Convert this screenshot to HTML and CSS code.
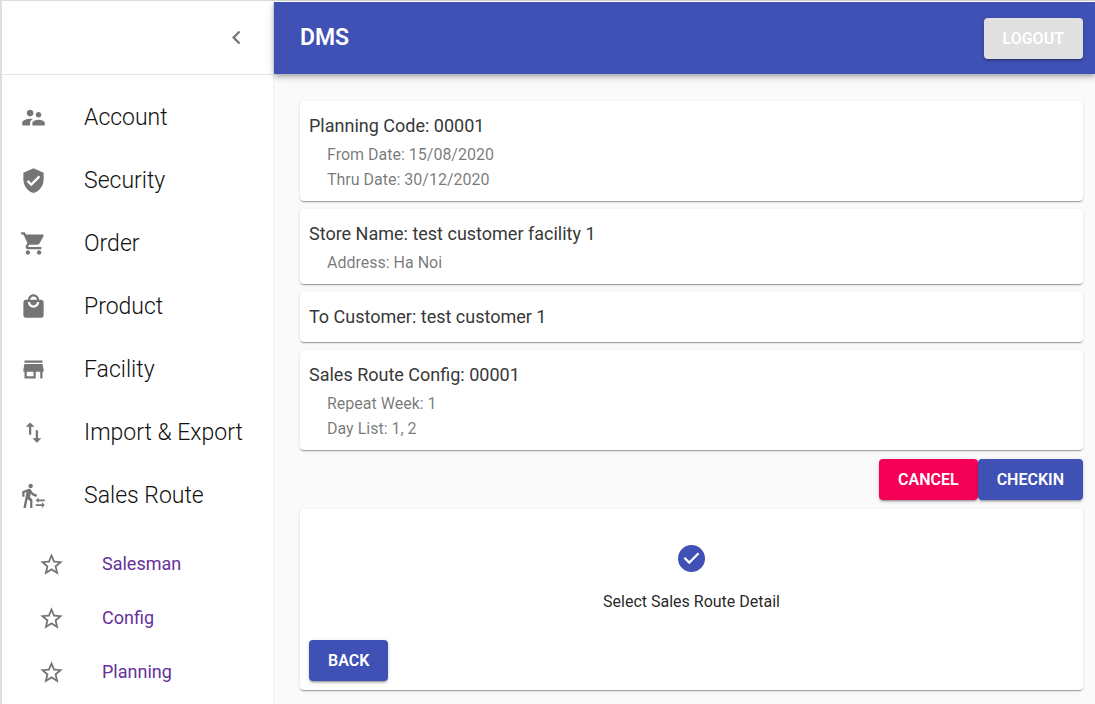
FILE: index.html
```html
<!DOCTYPE html>
<html lang="en">
<head>
<meta charset="utf-8">
<meta name="viewport" content="width=device-width, initial-scale=1">
<title>DMS</title>
<link rel="stylesheet" href="styles.css">
</head>
<body>
<div class="app">
  <aside class="sidebar">
    <div class="sidebar-head">
      <button class="icon-button" type="button" aria-label="Collapse menu">
        <svg class="icon" viewBox="0 0 24 24"><path d="M15.41 7.41L14 6l-6 6 6 6 1.41-1.41L10.83 12z"/></svg>
      </button>
    </div>
    <nav>
      <ul class="menu">
        <li><button class="menu-item" type="button"><svg class="icon" viewBox="0 0 24 24"><path d="M16.5 12c1.38 0 2.49-1.12 2.49-2.5S17.88 7 16.5 7C15.12 7 14 8.12 14 9.5s1.12 2.5 2.5 2.5zM9 11c1.66 0 2.99-1.34 2.99-3S10.66 5 9 5C7.34 5 6 6.34 6 8s1.34 3 3 3zm7.5 3c-1.83 0-5.5.92-5.5 2.75V19h11v-2.25c0-1.83-3.67-2.75-5.5-2.75zM9 13c-2.33 0-7 1.17-7 3.5V19h7v-2.25c0-.85.33-2.34 2.37-3.47C10.5 13.1 9.66 13 9 13z"/></svg>Account</button></li>
        <li><button class="menu-item" type="button"><svg class="icon" viewBox="0 0 24 24"><path d="M12 1L3 5v6c0 5.55 3.84 10.74 9 12 5.16-1.26 9-6.45 9-12V5l-9-4zm-2 16l-4-4 1.41-1.41L10 14.17l6.59-6.59L18 9l-8 8z"/></svg>Security</button></li>
        <li><button class="menu-item" type="button"><svg class="icon" viewBox="0 0 24 24"><path d="M7 18c-1.1 0-1.99.9-1.99 2S5.9 22 7 22s2-.9 2-2-.9-2-2-2zM1 2v2h2l3.6 7.59-1.35 2.45c-.16.28-.25.61-.25.96 0 1.1.9 2 2 2h12v-2H7.42c-.14 0-.25-.11-.25-.25l.03-.12.9-1.63h7.45c.75 0 1.41-.41 1.75-1.03l3.58-6.49c.08-.14.12-.31.12-.48 0-.55-.45-1-1-1H5.21l-.94-2H1zm16 16c-1.1 0-1.99.9-1.99 2s.89 2 1.99 2 2-.9 2-2-.9-2-2-2z"/></svg>Order</button></li>
        <li><button class="menu-item" type="button"><svg class="icon" viewBox="0 0 24 24"><path d="M19 6h-2c0-2.76-2.24-5-5-5S7 3.24 7 6H5c-1.1 0-1.99.9-1.99 2L3 20c0 1.1.9 2 2 2h14c1.1 0 2-.9 2-2V8c0-1.1-.9-2-2-2zm-7-3c1.66 0 3 1.34 3 3H9c0-1.66 1.34-3 3-3zm0 10c-2.76 0-5-2.24-5-5h2c0 1.66 1.34 3 3 3s3-1.34 3-3h2c0 2.76-2.24 5-5 5z"/></svg>Product</button></li>
        <li><button class="menu-item" type="button"><svg class="icon" viewBox="0 0 24 24"><path d="M20 4H4v2h16V4zm1 10v-2l-1-5H4l-1 5v2h1v6h10v-6h4v6h2v-6h1zm-9 4H6v-4h6v4z"/></svg>Facility</button></li>
        <li><button class="menu-item" type="button"><svg class="icon" viewBox="0 0 24 24"><path d="M9 3L5 6.99h3V14h2V6.99h3L9 3zm7 14.01V10h-2v7.01h-3L15 21l4-3.99h-3z"/></svg>Import &amp; Export</button></li>
        <li><button class="menu-item" type="button"><svg class="icon" viewBox="0 0 24 24"><path d="M16.49 15.5v-1.75L14 16.25l2.49 2.5V17H22v-1.5zM19.51 19.75H14v1.5h5.51V23L22 20.5 19.51 18zM9.5 5.5c1.1 0 2-.9 2-2s-.9-2-2-2-2 .9-2 2 .9 2 2 2zM5.75 8.9L3 23h2.1l1.75-8L9 17v6h2v-7.55L8.95 13.4l.6-3C10.85 12 12.8 13 15 13v-2c-1.85 0-3.45-1-4.35-2.45l-.95-1.6C9.35 6.35 8.7 6 8 6c-.25 0-.5.05-.75.15L2 8.3V13h2V9.65l1.75-.75"/></svg>Sales Route</button>
          <ul class="submenu">
            <li><a class="submenu-item" href="#salesman"><svg class="icon" viewBox="0 0 24 24"><path d="M22 9.24l-7.19-.62L12 2 9.19 8.63 2 9.24l5.46 4.73L5.82 21 12 17.27 18.18 21l-1.63-7.03L22 9.24zM12 15.4l-3.76 2.27 1-4.28-3.32-2.88 4.38-.38L12 6.1l1.71 4.04 4.38.38-3.32 2.88 1 4.28L12 15.4z"/></svg>Salesman</a></li>
            <li><a class="submenu-item" href="#config"><svg class="icon" viewBox="0 0 24 24"><path d="M22 9.24l-7.19-.62L12 2 9.19 8.63 2 9.24l5.46 4.73L5.82 21 12 17.27 18.18 21l-1.63-7.03L22 9.24zM12 15.4l-3.76 2.27 1-4.28-3.32-2.88 4.38-.38L12 6.1l1.71 4.04 4.38.38-3.32 2.88 1 4.28L12 15.4z"/></svg>Config</a></li>
            <li><a class="submenu-item" href="#planning"><svg class="icon" viewBox="0 0 24 24"><path d="M22 9.24l-7.19-.62L12 2 9.19 8.63 2 9.24l5.46 4.73L5.82 21 12 17.27 18.18 21l-1.63-7.03L22 9.24zM12 15.4l-3.76 2.27 1-4.28-3.32-2.88 4.38-.38L12 6.1l1.71 4.04 4.38.38-3.32 2.88 1 4.28L12 15.4z"/></svg>Planning</a></li>
          </ul>
        </li>
      </ul>
    </nav>
  </aside>
  <div class="page">
    <header class="topbar">
      <h1 class="brand">DMS</h1>
      <button class="button button-plain" type="button">LOGOUT</button>
    </header>
    <main class="content">
      <section class="card">
        <h2 class="card-title">Planning Code: 00001</h2>
        <p class="card-line">From Date: 15/08/2020</p>
        <p class="card-line">Thru Date: 30/12/2020</p>
      </section>
      <section class="card">
        <h2 class="card-title">Store Name: test customer facility 1</h2>
        <p class="card-line">Address: Ha Noi</p>
      </section>
      <section class="card">
        <h2 class="card-title">To Customer: test customer 1</h2>
      </section>
      <section class="card">
        <h2 class="card-title">Sales Route Config: 00001</h2>
        <p class="card-line">Repeat Week: 1</p>
        <p class="card-line">Day List: 1, 2</p>
      </section>
      <div class="actions">
        <button class="button button-danger" type="button">CANCEL</button>
        <button class="button" type="button">CHECKIN</button>
      </div>
      <section class="card">
        <div class="step">
          <svg class="icon step-icon" viewBox="0 0 24 24"><path d="M12 0a12 12 0 1 0 0 24 12 12 0 0 0 0-24zm-2 17l-5-5 1.4-1.4 3.6 3.6 7.6-7.6L19 8l-9 9z"/></svg>
          <span class="step-label">Select Sales Route Detail</span>
        </div>
        <button class="button" type="button">BACK</button>
      </section>
    </main>
  </div>
</div>
</body>
</html>
```

FILE: styles.css
```css
* {
  box-sizing: border-box;
}

body {
  margin: 0;
  background: #fafafa;
  color: rgba(0, 0, 0, 0.87);
  font-family: Roboto, "Liberation Sans", sans-serif;
}

ul,
h1,
h2,
p {
  margin: 0;
  padding: 0;
  list-style: none;
}

button {
  border: 0;
  font-family: inherit;
  cursor: pointer;
}

.app {
  display: grid;
  grid-template-columns: 274px 1fr;
  min-height: 100vh;
  border-top: 1px solid #dcdcdc;
}

.icon {
  width: 27px;
  height: 27px;
  flex: none;
  fill: #757575;
}

.sidebar {
  background: #fff;
  border-left: 2px solid #dedede;
  border-right: 1px solid #f0f0f0;
}

.sidebar-head {
  display: flex;
  align-items: center;
  justify-content: flex-end;
  height: 74px;
  padding-right: 9px;
  border-bottom: 1px solid #e4e4e4;
}

.icon-button {
  display: flex;
  padding: 14px;
  background: none;
}

.menu {
  padding-top: 11px;
}

.menu-item {
  display: flex;
  align-items: center;
  gap: 37px;
  width: 100%;
  padding: 15px 18px;
  background: none;
  color: #111;
  font-size: 23px;
  font-weight: 300;
  line-height: 33px;
  text-align: left;
}

.submenu {
  padding: 10px 0;
}

.submenu-item {
  display: flex;
  align-items: center;
  gap: 37px;
  padding: 9px 36px;
  color: #66309a;
  font-size: 18px;
  font-weight: 400;
  line-height: 36px;
  text-decoration: none;
}

.topbar {
  display: flex;
  align-items: center;
  justify-content: space-between;
  height: 73px;
  padding: 0 12px 0 26px;
  border-top: 1px solid #fff;
  background: #3f51b5;
  color: #fff;
  box-shadow: 0 2px 4px -1px rgba(0, 0, 0, 0.2), 0 4px 5px rgba(0, 0, 0, 0.14), 0 1px 11px rgba(0, 0, 0, 0.12);
}

.brand {
  font-size: 23px;
  font-weight: 600;
  line-height: 36px;
}

.content {
  display: flex;
  flex-direction: column;
  gap: 8px;
  padding: 27px 12px 14px 26px;
}

.card {
  padding: 9px;
  border-radius: 4px;
  background: #fff;
  box-shadow: 0 2px 1px -1px rgba(0, 0, 0, 0.2), 0 1px 1px rgba(0, 0, 0, 0.14), 0 1px 3px rgba(0, 0, 0, 0.12);
}

.card-title {
  color: #383838;
  font-size: 18px;
  font-weight: 400;
  line-height: 32px;
}

.card-line {
  padding-left: 18px;
  color: rgba(0, 0, 0, 0.54);
  font-size: 16px;
  line-height: 25px;
}

.actions {
  display: flex;
  align-items: center;
  justify-content: flex-end;
  min-height: 43px;
}

.button {
  padding: 6px 19px;
  border-radius: 4px;
  background: #3f51b5;
  color: #fff;
  font-size: 16px;
  font-weight: 600;
  line-height: 29px;
  box-shadow: 0 3px 1px -2px rgba(0, 0, 0, 0.2), 0 2px 2px rgba(0, 0, 0, 0.14), 0 1px 5px rgba(0, 0, 0, 0.12);
}

.button-danger {
  background: #f50057;
}

.button-plain {
  background: #e0e0e0;
}

.step {
  display: flex;
  flex-direction: column;
  align-items: center;
  gap: 18px;
  padding: 27px;
}

.step-icon {
  fill: #3f51b5;
}

.step-label {
  font-size: 16px;
  line-height: 23px;
}
```
